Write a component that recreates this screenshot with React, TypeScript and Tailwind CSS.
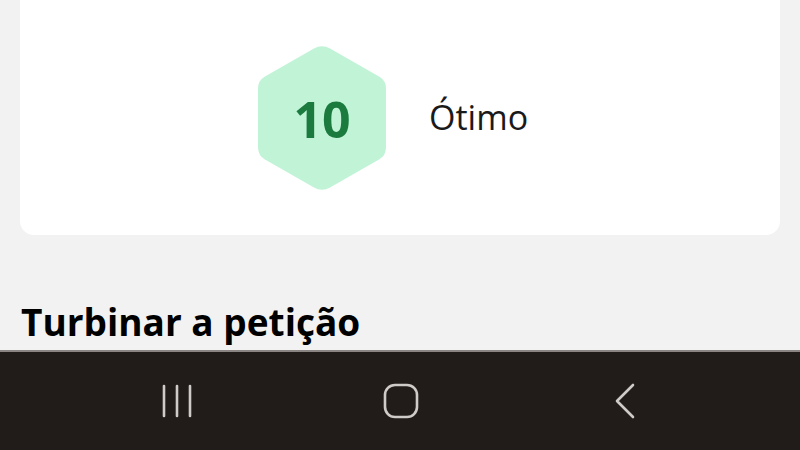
import React from "react";

function Hexagon({ score }: { score: number }) {
  return (
    <div className="relative w-[130px] h-[148px] flex items-center justify-center">
      <svg
        className="absolute inset-0"
        width="130"
        height="148"
        viewBox="0 0 130 148"
      >
        <path
          d="M57 4.5 Q65 0 73 4.5 L122 32.5 Q129 36.5 129 44.5 L129 103.5 Q129 111.5 122 115.5 L73 143.5 Q65 148 57 143.5 L8 115.5 Q1 111.5 1 103.5 L1 44.5 Q1 36.5 8 32.5 Z"
          fill="#c1f3d6"
        />
      </svg>
      <span className="relative text-[50px] font-bold text-[#1b7a3e] leading-none mt-[2px]">
        {score}
      </span>
    </div>
  );
}

function NavBar() {
  return (
    <div className="h-[100px] bg-[#211c1a] border-t-2 border-[#8a8482] flex items-center pl-[157px] gap-[184px]">
      <svg width="40" height="36" viewBox="0 0 40 36">
        <g stroke="#cfcbc9" strokeWidth="2.6" strokeLinecap="round">
          <line x1="7" y1="3" x2="7" y2="33" />
          <line x1="20" y1="3" x2="20" y2="33" />
          <line x1="33" y1="3" x2="33" y2="33" />
        </g>
      </svg>
      <svg width="40" height="36" viewBox="0 0 40 36">
        <rect
          x="4"
          y="2"
          width="32"
          height="32"
          rx="10"
          fill="none"
          stroke="#cfcbc9"
          strokeWidth="2.6"
        />
      </svg>
      <svg width="40" height="36" viewBox="0 0 40 36">
        <polyline
          points="28,2 12,18 28,34"
          fill="none"
          stroke="#cfcbc9"
          strokeWidth="2.6"
          strokeLinecap="round"
          strokeLinejoin="round"
        />
      </svg>
    </div>
  );
}

export default function App() {
  return (
    <div
      className="w-[800px] h-[450px] bg-[#f2f2f2] flex flex-col overflow-hidden"
      style={{ fontFamily: '"Open Sans", "Noto Sans", sans-serif' }}
    >
      <div className="flex-1 flex flex-col">
        <div className="mx-[20px] -mt-[20px] h-[255px] bg-white rounded-[14px] flex items-end pl-[237px] pb-[43px]">
          <div className="flex items-center gap-[42px]">
            <Hexagon score={10} />
            <span className="text-[34px] text-[#1a1a1a] leading-none mb-[2px]">
              Ótimo
            </span>
          </div>
        </div>
        <h2 className="mt-[68px] ml-[21px] text-[37px] font-bold text-black leading-none">
          Turbinar a petição
        </h2>
      </div>
      <NavBar />
    </div>
  );
}
